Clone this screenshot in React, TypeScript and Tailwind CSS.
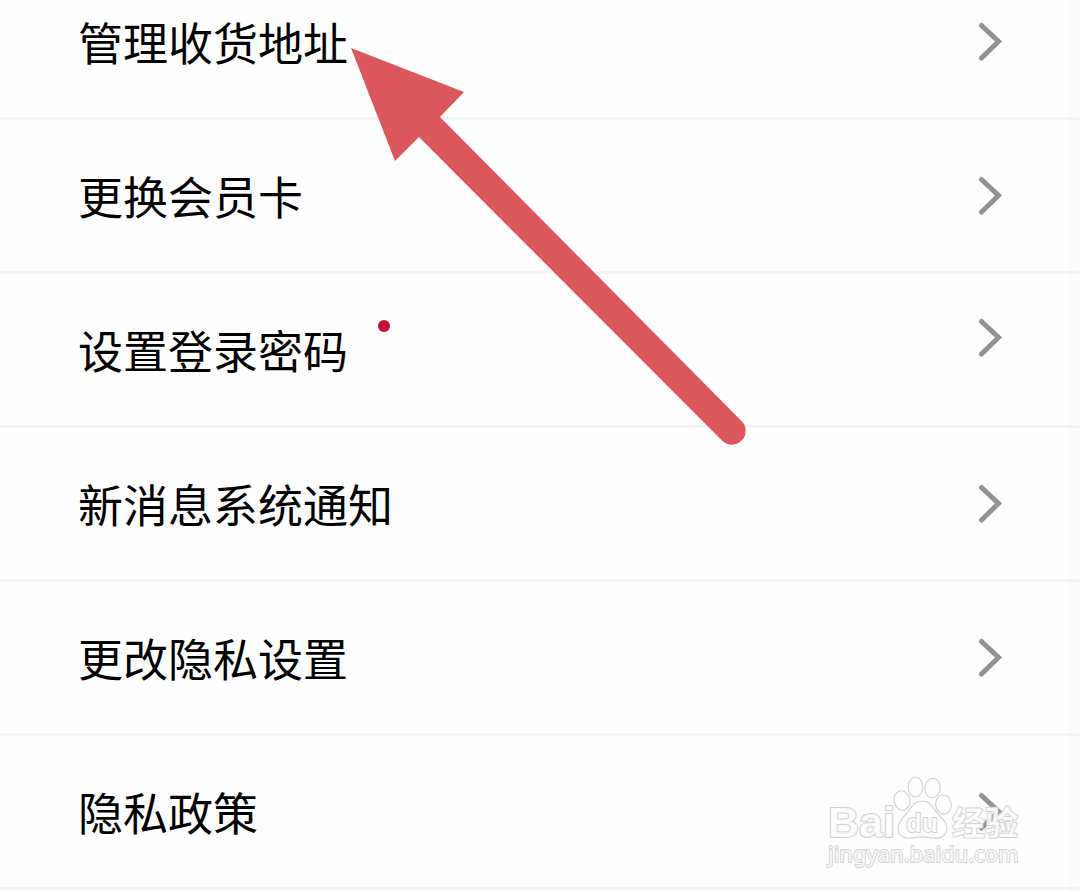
type Item = { label: string; href: string; unread?: boolean };

const items: Item[] = [
  { label: "管理收货地址", href: "#address" },
  { label: "更换会员卡", href: "#card" },
  { label: "设置登录密码", href: "#password", unread: true },
  { label: "新消息系统通知", href: "#notice" },
  { label: "更改隐私设置", href: "#privacy" },
  { label: "隐私政策", href: "#policy" },
];

function Chevron() {
  return (
    <svg
      className="h-10 w-6"
      viewBox="0 0 24 40"
      fill="none"
      stroke="#929292"
      strokeWidth="5"
      strokeLinecap="round"
      strokeLinejoin="miter"
      aria-hidden="true"
    >
      <path d="M3.500 3.500 20.500 19.500 3.500 36" />
    </svg>
  );
}

function Row({ label, href, unread }: Item) {
  return (
    <li className="border-b-3 border-[#f3f3f3]">
      <a href={href} className="flex h-[151px] items-center justify-between px-[78px]">
        <span className="flex items-start gap-[30px] text-[45px] leading-[60px] text-black">
          {label}
          {unread && <span className="size-3 rounded-full bg-[#c60f36]" />}
        </span>
        <span className={unread ? "pb-6" : ""}>
          <Chevron />
        </span>
      </a>
    </li>
  );
}

function Arrow() {
  return (
    <svg
      className="pointer-events-none absolute top-12 left-[351px] h-[400px] w-[400px]"
      viewBox="351 48 400 400"
      fill="#db575b"
      aria-hidden="true"
    >
      <path d="M351 48 464 92 440 117 742 421.500A13.800 13.800 0 0 1 722.500 441L419 137 395 161Z" />
    </svg>
  );
}

function Watermark() {
  return (
    <svg
      className="pointer-events-none absolute right-[54px] bottom-5 h-[100px] w-[200px]"
      viewBox="826 772 200 100"
      fill="#fefefe"
      fillOpacity="0.85"
      stroke="#d2d2d2"
      strokeWidth="1.200"
      strokeLinejoin="round"
    >
      <text
        x="828"
        y="837"
        fontSize="43"
        strokeWidth="2"
        className="font-['Liberation_Sans',sans-serif] font-bold"
        style={{ paintOrder: "stroke" }}
      >
        Bai
      </text>
      <ellipse cx="902" cy="800.500" rx="7.800" ry="9.800" transform="rotate(-12 902 800.500)" />
      <ellipse cx="915.500" cy="787" rx="7.200" ry="10" />
      <ellipse cx="932.500" cy="788" rx="7.600" ry="9.800" transform="rotate(8 932.500 788)" />
      <ellipse cx="943.500" cy="804.500" rx="7.800" ry="9.600" transform="rotate(-4 943.500 804.500)" />
      <path d="M922 801C914 801 911 808 907 813C903 818 898 822 898 829C898 836 904 838.500 910 838C918 837 926 837 932 838C940 839 947 836 947 828C947 821 941 818 937 813C933 807 930 801 922 801Z" />
      <g strokeWidth="1.800" style={{ paintOrder: "stroke" }}>
        <text x="906" y="832" fontSize="26" className="font-['Liberation_Sans',sans-serif] font-bold">du</text>
        <text x="952" y="835" fontSize="33" className="font-['Noto_Sans_CJK_SC',sans-serif] font-bold">经验</text>
        <text x="828" y="862" fontSize="22" className="font-['Noto_Sans',sans-serif]">jingyan.baidu.com</text>
      </g>
    </svg>
  );
}

export default function App() {
  return (
    <main className="relative overflow-hidden bg-[linear-gradient(to_left,#fbfbfb_12px,#fefefe_12px)] pb-[2px] font-['Noto_Sans_CJK_SC',sans-serif]">
      <ul className="-mt-[34px]">
        {items.map((item) => (
          <Row key={item.href} {...item} />
        ))}
      </ul>
      <Arrow />
      <Watermark />
    </main>
  );
}
